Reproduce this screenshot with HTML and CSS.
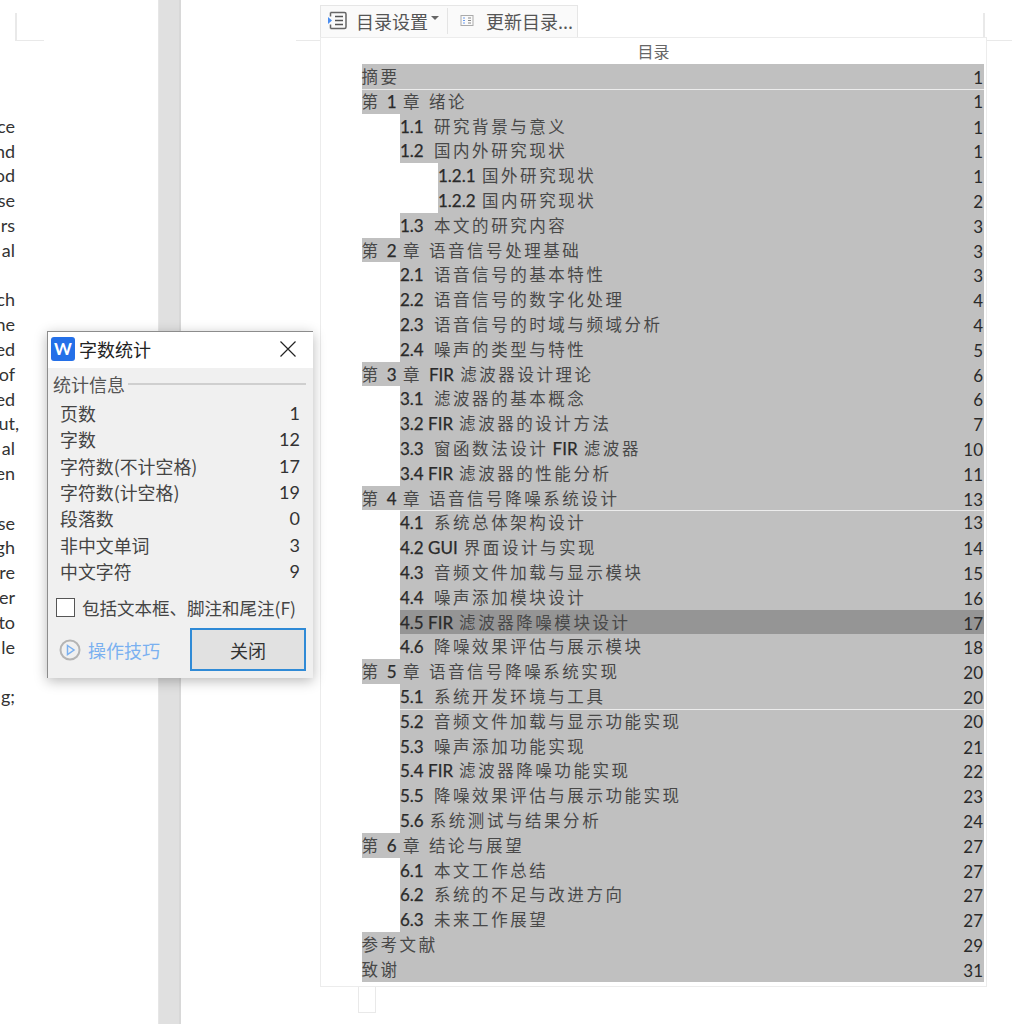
FILE: index.html
```html
<!DOCTYPE html>
<html lang="zh-CN">
<head>
<meta charset="utf-8">
<title>目录</title>
<link rel="stylesheet" href="styles.css">
</head>
<body>
<div class="shell">
  <section class="left-page">
    <i class="mark mark-lv"></i><i class="mark mark-lh"></i>
    <div class="tails">
      <div>ce</div><div>nd</div><div>od</div><div>se</div><div>rs</div><div>al</div><div>&nbsp;</div>
      <div>ch</div><div>he</div><div>ed</div><div>of</div><div>ed</div><div class="hang">ut,</div><div>al</div><div>en</div><div>&nbsp;</div>
      <div>se</div><div>gh</div><div>re</div><div>er</div><div>to</div><div>le</div><div>&nbsp;</div><div>g;</div>
    </div>
  </section>
  <div class="gutter"></div>
  <section class="right-area">
    <i class="mark mark-a"></i><i class="mark mark-b"></i><i class="mark mark-c"></i>
    <div class="toolbar">
      <button class="tool tool-toc">
        <svg width="21" height="21" viewBox="0 0 21 21"><path d="M3.500 2.500h14a1.500 1.500 0 0 1 1.500 1.500v13a1.500 1.500 0 0 1-1.500 1.500h-14" fill="none" stroke="#666" stroke-width="1.500"/><path d="M3.500 2.500v4M3.500 14.500v4" stroke="#666" stroke-width="1.500"/><path d="M1 7l4 3.500-4 3.500z" fill="#4a8df0"/><path d="M8 6.500h8M8 10.500h8M8 14.500h8" stroke="#555" stroke-width="1.500"/></svg>
        <span>目录设置</span><b class="caret"></b>
      </button>
      <i class="tool-sep"></i>
      <button class="tool tool-update">
        <svg width="14" height="14" viewBox="0 0 14 14"><rect x="1" y="1.500" width="12" height="10" fill="none" stroke="#aaa"/><path d="M3 4h2M3 6.500h2M3 9h2" stroke="#6a9cf0"/><path d="M8 4h3M8 6.500h3M8 9h3" stroke="#888"/></svg>
        <span>更新目录...</span>
      </button>
    </div>
    <div class="page">
      <div class="page-title">目录</div>
      <div class="row l1"><span>摘要</span><span>1</span></div>
      <div class="row l1 sep"><span>第 <b>1</b> 章<i class="gap"></i>绪论</span><span>1</span></div>
      <div class="row l2"><span><b class="n">1.1</b>研究背景与意义</span><span>1</span></div>
      <div class="row l2"><span><b class="n">1.2</b>国内外研究现状</span><span>1</span></div>
      <div class="row l3"><span><b class="n3">1.2.1</b>国外研究现状</span><span>1</span></div>
      <div class="row l3"><span><b class="n3">1.2.2</b>国内研究现状</span><span>2</span></div>
      <div class="row l2"><span><b class="n">1.3</b>本文的研究内容</span><span>3</span></div>
      <div class="row l1"><span>第 <b>2</b> 章<i class="gap"></i>语音信号处理基础</span><span>3</span></div>
      <div class="row l2"><span><b class="n">2.1</b>语音信号的基本特性</span><span>3</span></div>
      <div class="row l2"><span><b class="n">2.2</b>语音信号的数字化处理</span><span>4</span></div>
      <div class="row l2"><span><b class="n">2.3</b>语音信号的时域与频域分析</span><span>4</span></div>
      <div class="row l2"><span><b class="n">2.4</b>噪声的类型与特性</span><span>5</span></div>
      <div class="row l1"><span>第 <b>3</b> 章<i class="gap"></i><b>FIR</b> 滤波器设计理论</span><span>6</span></div>
      <div class="row l2"><span><b class="n">3.1</b>滤波器的基本概念</span><span>6</span></div>
      <div class="row l2"><span><b class="m">3.2 FIR</b>滤波器的设计方法</span><span>7</span></div>
      <div class="row l2"><span><b class="n">3.3</b>窗函数法设计 <b class="f">FIR</b> 滤波器</span><span>10</span></div>
      <div class="row l2"><span><b class="m">3.4 FIR</b>滤波器的性能分析</span><span>11</span></div>
      <div class="row l1"><span>第 <b>4</b> 章<i class="gap"></i>语音信号降噪系统设计</span><span>13</span></div>
      <div class="row l2 sep"><span><b class="n">4.1</b>系统总体架构设计</span><span>13</span></div>
      <div class="row l2"><span><b class="m">4.2 GUI</b>界面设计与实现</span><span>14</span></div>
      <div class="row l2"><span><b class="n">4.3</b>音频文件加载与显示模块</span><span>15</span></div>
      <div class="row l2"><span><b class="n">4.4</b>噪声添加模块设计</span><span>16</span></div>
      <div class="row l2 cur"><span><b class="m">4.5 FIR</b>滤波器降噪模块设计</span><span>17</span></div>
      <div class="row l2"><span><b class="n">4.6</b>降噪效果评估与展示模块</span><span>18</span></div>
      <div class="row l1"><span>第 <b>5</b> 章<i class="gap"></i>语音信号降噪系统实现</span><span>20</span></div>
      <div class="row l2"><span><b class="n">5.1</b>系统开发环境与工具</span><span>20</span></div>
      <div class="row l2 sep"><span><b class="n">5.2</b>音频文件加载与显示功能实现</span><span>20</span></div>
      <div class="row l2"><span><b class="n">5.3</b>噪声添加功能实现</span><span>21</span></div>
      <div class="row l2"><span><b class="m">5.4 FIR</b>滤波器降噪功能实现</span><span>22</span></div>
      <div class="row l2"><span><b class="n">5.5</b>降噪效果评估与展示功能实现</span><span>23</span></div>
      <div class="row l2"><span><b class="m">5.6</b>系统测试与结果分析</span><span>24</span></div>
      <div class="row l1"><span>第 <b>6</b> 章<i class="gap"></i>结论与展望</span><span>27</span></div>
      <div class="row l2"><span><b class="n">6.1</b>本文工作总结</span><span>27</span></div>
      <div class="row l2"><span><b class="n">6.2</b>系统的不足与改进方向</span><span>27</span></div>
      <div class="row l2"><span><b class="n">6.3</b>未来工作展望</span><span>27</span></div>
      <div class="row l1"><span>参考文献</span><span>29</span></div>
      <div class="row l1"><span>致谢</span><span>31</span></div>
    </div>
  </section>
</div>

<aside class="dialog">
  <header class="dlg-head">
    <span class="logo">W</span>
    <span class="dlg-title">字数统计</span>
    <svg class="dlg-x" width="16" height="16" viewBox="0 0 16 16"><path d="M.5.500l15 15M15.500.500l-15 15" stroke="#222" stroke-width="1.200" fill="none"/></svg>
  </header>
  <div class="dlg-body">
    <div class="legend"><span>统计信息</span><i></i></div>
    <dl class="stats">
      <div><dt>页数</dt><dd>1</dd></div>
      <div><dt>字数</dt><dd>12</dd></div>
      <div><dt>字符数(不计空格)</dt><dd>17</dd></div>
      <div><dt>字符数(计空格)</dt><dd>19</dd></div>
      <div><dt>段落数</dt><dd>0</dd></div>
      <div><dt>非中文单词</dt><dd>3</dd></div>
      <div><dt>中文字符</dt><dd>9</dd></div>
    </dl>
    <div class="check"><i class="box"></i><span>包括文本框、脚注和尾注(F)</span></div>
    <div class="actions">
      <a class="tips">
        <svg width="22" height="22" viewBox="0 0 22 22"><circle cx="11" cy="11" r="9.500" fill="none" stroke="#b4b4b4" stroke-width="2"/><path d="M8.500 6.500l6.500 4.500-6.500 4.500z" fill="none" stroke="#7ab0f0" stroke-width="1.500"/></svg>
        <span>操作技巧</span>
      </a>
      <button class="close">关闭</button>
    </div>
  </div>
</aside>
</body>
</html>
```
FILE: styles.css
```css
* { box-sizing: border-box; }
html, body { margin: 0; padding: 0; }
body {
  position: relative;
  width: 1024px;
  height: 1024px;
  overflow: hidden;
  background: #fff;
  font-family: "Noto Sans CJK SC", "Lato", sans-serif;
  color: #333;
}
.shell { display: flex; height: 1024px; }

/* left page */
.left-page { position: relative; width: 158px; flex: none; }
.tails {
  width: 15px;
  padding-top: 113.800px;
  font: 18px/24.800px "Lato", sans-serif;
  color: #333;
  white-space: nowrap;
}
.tails div { display: flex; justify-content: flex-end; height: 24.800px; }
.tails .hang { margin-right: -4px; }
.gutter {
  width: 23px;
  flex: none;
  background: #e0e0e0;
  border-left: 1px solid #e6e6e6;
  border-right: 2px solid #d8d8d8;
}

/* crop marks */
.mark { position: absolute; display: block; background: #e9e9e9; }
.mark-lv { left: 15px; top: 13px; width: 1.500px; height: 27px; }
.mark-lh { left: 15px; top: 39.500px; width: 29px; height: 1.500px; }
.mark-a { left: 115px; top: 39.500px; width: 25px; height: 1.500px; }
.mark-b { left: 802px; top: 13px; width: 1.500px; height: 28px; }
.mark-c { left: 802px; top: 39.500px; width: 29px; height: 1.500px; }

/* right area */
.right-area { position: relative; flex: 1; padding: 5px 0 0 139px; }
.toolbar {
  display: flex;
  align-items: center;
  width: 258px;
  height: 32px;
  background: #fafafa;
  border: 1.500px solid #e6e6e6;
  border-bottom: 0;
  padding: 0 0 2px 6px;
}
.tool {
  display: flex;
  align-items: center;
  border: 0;
  padding: 0;
  background: none;
  font: 18px/24px "Noto Sans CJK SC", sans-serif;
  color: #555;
}
.tool-toc svg { margin-right: 8px; }
.caret {
  width: 0; height: 0; margin: -6px 0 0 3px;
  border: 4px solid transparent;
  border-top: 4px solid #666;
  border-bottom: 0;
}
.tool-sep { width: 1px; height: 26px; background: #e4e4e4; margin: 0 12px 0 8px; }
.tool-update svg { margin-right: 12px; }

.page {
  position: relative;
  width: 667px;
  height: 950px;
  border: 1.500px solid #ececec;
  padding: 0 2px 0 40.500px;
  background: #fff;
}
.page::after {
  content: "";
  position: absolute;
  left: 37px;
  top: 948.500px;
  width: 16px;
  height: 25px;
  background: #fff;
  border: 1.500px solid #e9e9e9;
  border-top: 0;
}
.page-title {
  height: 26.100px;
  margin-left: -40.500px;
  margin-right: -2px;
  text-align: center;
  font-size: 16px;
  line-height: 27px;
  color: #666;
}

.row {
  display: flex;
  justify-content: space-between;
  height: 24.800px;
  background: #c0c0c0;
  font-size: 16.500px;
  line-height: 24.800px;
  letter-spacing: 2.550px;
  color: #484848;
  white-space: nowrap;
}
.row b {
  font: 400 17px/24.800px "Lato", sans-serif;
  letter-spacing: 0;
  color: #2a2a2a;
  -webkit-text-stroke: .25px #2a2a2a;
}
.row > span:last-child {
  font: 17px/24.800px "Lato", sans-serif;
  letter-spacing: 0;
  color: #2a2a2a;
  padding-right: 1px;
  padding-top: 2px;
}
.row.sep > span:last-child { padding-top: 0; }
.gap { display: inline-block; width: 7px; }
.l2 { margin-left: 38.500px; }
.l3 { margin-left: 76.500px; }
.row .n { display: inline-block; width: 34px; }
.row .n3 { display: inline-block; width: 44px; }
.row .m { display: inline-block; margin-right: 6px; }
.row .f { margin-left: -2px; }
.sep { border-top: 1.500px solid #ececec; line-height: 23.300px; }
.cur { background: #959595; }

/* dialog */
.dialog {
  position: absolute;
  left: 47px;
  top: 331px;
  width: 266px;
  height: 347px;
  background: #f0f0f0;
  border: 1px solid #8c8c8c;
  border-bottom: 0;
  border-right: 0;
  box-shadow: 0 3px 12px rgba(0, 0, 0, .28);
}
.dlg-head {
  display: flex;
  align-items: center;
  height: 36px;
  background: #fff;
  padding: 0 17px 2px 3px;
}
.logo {
  width: 24px;
  height: 24px;
  border-radius: 3px;
  background: #2470e8;
  color: #fff;
  font: 700 17px/24px "Lato", sans-serif;
  text-align: center;
}
.dlg-title { margin-left: 4px; font-size: 18px; line-height: 24px; color: #222; flex: 1; }
.dlg-body { padding: 3px 7px 0 5px; }
.legend { display: flex; align-items: center; height: 26px; font-size: 18px; color: #555; }
.legend i { flex: 1; height: 1.500px; background: #cfcfcf; margin-left: 3px; }
.stats { margin: 3px 0 0; padding: 0 6px 0 7px; }
.stats div { display: flex; justify-content: space-between; height: 26.300px; align-items: center; }
.stats dt { font-size: 17.900px; color: #444; }
.stats dd { margin: 0; font: 18px "Lato", sans-serif; color: #333; }
.check { display: flex; align-items: center; margin: 12px 0 0 3px; height: 22px; font-size: 17.500px; color: #444; white-space: nowrap; }
.box { width: 19px; height: 19px; background: #fff; border: 1px solid #555; margin-right: 7px; flex: none; }
.actions { display: flex; justify-content: space-between; align-items: center; margin-top: 10px; padding-left: 6px; }
.tips { display: flex; align-items: center; gap: 7px; font-size: 18px; color: #7ab0f0; }
.close {
  width: 116px;
  height: 43px;
  background: #e1e1e1;
  border: 2px solid #2f8ad6;
  padding: 0;
  font: 18px "Noto Sans CJK SC", sans-serif;
  color: #333;
}
```
